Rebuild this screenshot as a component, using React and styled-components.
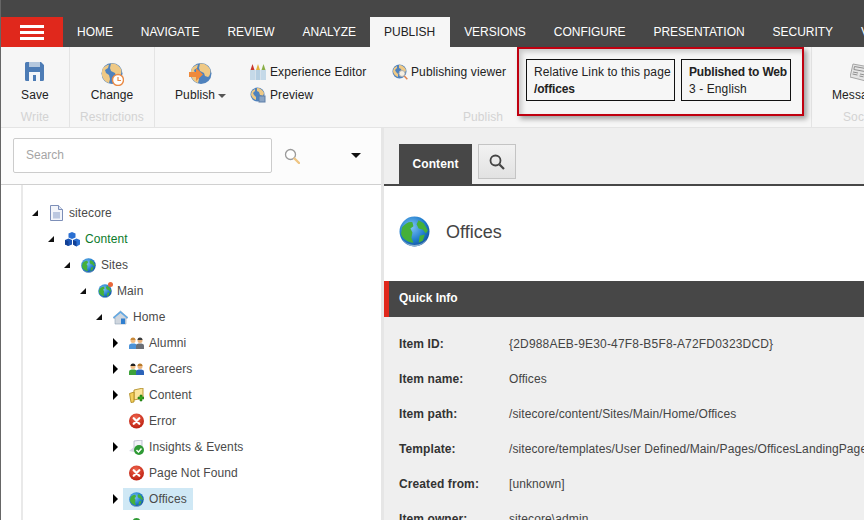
import React, { useId } from "react";
import styled, { createGlobalStyle } from "styled-components";

const tabs = ["Home", "Navigate", "Review", "Analyze", "Publish", "Versions", "Configure", "Presentation", "Security", "View"];

const treeRows = [
  { label: "sitecore", level: 0, arrow: "open", icon: "doc" },
  { label: "Content", level: 1, arrow: "open", icon: "cubes", green: true },
  { label: "Sites", level: 2, arrow: "open", icon: "globe" },
  { label: "Main", level: 3, arrow: "open", icon: "pinGlobe" },
  { label: "Home", level: 4, arrow: "open", icon: "house" },
  { label: "Alumni", level: 5, arrow: "closed", icon: "people" },
  { label: "Careers", level: 5, arrow: "closed", icon: "team" },
  { label: "Content", level: 5, arrow: "closed", icon: "folder" },
  { label: "Error", level: 5, icon: "error" },
  { label: "Insights & Events", level: 5, arrow: "closed", icon: "insights" },
  { label: "Page Not Found", level: 5, icon: "error" },
  { label: "Offices", level: 5, arrow: "closed", icon: "globe", selected: true },
  { label: "Locations", level: 5, icon: "pin" },
];

const infoRows = [
  ["Item ID:", "{2D988AEB-9E30-47F8-B5F8-A72FD0323DCD}"],
  ["Item name:", "Offices"],
  ["Item path:", "/sitecore/content/Sites/Main/Home/Offices"],
  ["Template:", "/sitecore/templates/User Defined/Main/Pages/OfficesLandingPage"],
  ["Created from:", "[unknown]"],
  ["Item owner:", "sitecore\\admin"],
];

function Globe({ size = 15 }) {
  const id = useId();
  return (
    <svg width={size} height={size} viewBox="0 0 30 30">
      <defs>
        <radialGradient id={id} cx="40%" cy="35%" r="70%">
          <stop offset="0" stopColor="#7fc4f5" />
          <stop offset="0.65" stopColor="#1f7ccc" />
          <stop offset="1" stopColor="#114f9c" />
        </radialGradient>
      </defs>
      <circle cx="15" cy="15" r="14.5" fill={`url(#${id})`} />
      <path d="M3 11c3-4 7-6 10-5l1 4-3 2 2 4-1 5 2 5c-5 0-11-4-12-9z" fill="#45b03a" />
      <path d="M19 4l5 3 4 7-2 3-3-4-4-1-2-4zM20 19l5-1-2 6-4 2z" fill="#45b03a" />
      <path d="M3 22c3 5 8 7.500 12 7.500S24 27 27 22c-3 4-7 6-12 6s-9-2-12-6z" fill="#8db3d2" />
    </svg>
  );
}

function TanGlobe({ overlay }) {
  return (
    <svg width="24" height="24" viewBox="0 0 24 24">
      <circle cx="12" cy="11.500" r="10.500" fill="#4f82bd" />
      <path d="M11 1.500c4-.5 8 1.500 10 5.500 1 3 0 7-2 8l-3-1-1-3-4-2-1-3zM3 6c2-2 4-3 6-3.500L8 6 5 8l1 3 3 2 1 4-1 4C5 20 2 16 1.800 12 2 10 2 8 3 6z" fill="#efc985" />
      {overlay === "arrow" && <path d="M0 10h7V6l7 6.500-7 6.500v-4H0z" fill="#ef8a3c" />}
      {overlay === "clock" && (
        <g>
          <circle cx="18" cy="18" r="5.500" fill="#fff" stroke="#ea8a45" strokeWidth="1.400" />
          <path d="M18 15v3.500h3" fill="none" stroke="#ea8a45" strokeWidth="1.200" />
        </g>
      )}
    </svg>
  );
}

function SmallTanGlobe({ overlay }) {
  return (
    <svg width="16" height="16" viewBox="0 0 16 16">
      <circle cx="7.500" cy="7.500" r="7" fill="#4f82bd" />
      <path d="M7 1c3 0 6 2 7 5l-1 3-3-1-1-3-2-1zM2 4l3-2v2L3 6l1 2 2 2v3c-3-1-5-4-5-6z" fill="#efc985" />
      {overlay === "lens" && (
        <g fill="none" stroke="#e0834f" strokeWidth="1.500">
          <circle cx="10" cy="9.500" r="3" fill="#f6efe2" stroke="#b0b0b0" strokeWidth="1" />
          <path d="M12.300 12l3 3.300" />
        </g>
      )}
      {overlay === "doc" && <rect x="9" y="9" width="6" height="6" fill="#8aa4c4" stroke="#5d7ea8" />}
    </svg>
  );
}

function SaveIcon() {
  return (
    <svg width="19" height="19" viewBox="0 0 19 19">
      <path d="M0 1.500A1.500 1.500 0 0 1 1.500 0H16l3 3v14.500a1.500 1.500 0 0 1-1.500 1.500h-16A1.500 1.500 0 0 1 0 17.500z" fill="#4d7cb5" />
      <rect x="4" y="0" width="11" height="5" fill="#b5c8de" />
      <rect x="4" y="10" width="11" height="9" fill="#f4f6f9" />
      <rect x="8" y="13" width="3" height="6" fill="#4d7cb5" />
    </svg>
  );
}

function CrayonsIcon() {
  return (
    <svg width="16" height="16" viewBox="0 0 16 16">
      <rect x="0" y="6" width="5" height="10" fill="#c5d9e8" />
      <rect x="5.500" y="6" width="5" height="10" fill="#b5cee1" />
      <rect x="11" y="6" width="5" height="10" fill="#c5d9e8" />
      <path d="M.5 6L2.500 0l2 6z" fill="#c8352b" />
      <path d="M6 6l2-6 2 6z" fill="#e3b33a" />
      <path d="M11.500 6l2-6 2 6z" fill="#8aae46" />
    </svg>
  );
}

function DocIcon() {
  return (
    <svg width="13" height="16" viewBox="0 0 13 16">
      <path d="M.5.500h8l4 4v11H.5z" fill="#f3f5fa" stroke="#7d8fb8" />
      <rect x="3" y="7" width="7" height="6.500" fill="#bcc8e0" />
      <path d="M8.500.500v4h4" fill="#dfe5f2" stroke="#7d8fb8" />
    </svg>
  );
}

function CubesIcon() {
  return (
    <svg width="15" height="15" viewBox="0 0 15 15">
      <path d="M4.500 0L8 1.500v4L4.500 7 1 5.500v-4z" fill="#2a6fd2" transform="translate(2.500 0)" />
      <path d="M0 8l3.500-1.500L7 8v4.500L3.500 14 0 12.500z" fill="#1c55b5" />
      <path d="M8 8l3.500-1.500L15 8v4.500L11.500 14.500 8 12.500z" fill="#2a6fd2" />
      <path d="M3.500 9.500V14L0 12.500V8zM11.500 9.500V14.500L8 12.500V8z" fill="#123f93" />
    </svg>
  );
}

function HouseIcon() {
  return (
    <svg width="15" height="15" viewBox="0 0 15 15">
      <path d="M7.500 1L15 7.500l-1 1-1-.8V14H2V7.700l-1 .8-1-1z" fill="#cfd6de" stroke="#8fa2b5" strokeWidth=".6" />
      <path d="M7.500 1L15 7.500l-1 1-6.500-5.500-6.500 5.500-1-1z" fill="#5fa8e6" />
      <rect x="8" y="8.500" width="4" height="5.500" fill="#2f7fd0" />
    </svg>
  );
}

function PersonPair({ leftShirt, rightShirt, leftHair, rightHair }) {
  return (
    <svg width="15" height="13" viewBox="0 0 15 13">
      <circle cx="4" cy="3.500" r="2.500" fill="#f0bd84" />
      <path d="M1.500 3a2.500 2.500 0 0 1 5 0z" fill={leftHair} />
      <path d="M0 12V8.500C0 7 2 6.500 4 6.500S8 7 8 8.500V12z" fill={leftShirt} />
      <circle cx="11" cy="3.500" r="2.500" fill="#e9b27c" />
      <path d="M8.500 3a2.500 2.500 0 0 1 5 0z" fill={rightHair} />
      <path d="M7 12V8.500C7 7 9 6.500 11 6.500s4 .5 4 2V12z" fill={rightShirt} />
    </svg>
  );
}

function FolderIcon() {
  return (
    <svg width="15" height="15" viewBox="0 0 15 15">
      <path d="M5 2l9-2v10l-9 2z" fill="#fbe59a" stroke="#a98418" strokeWidth=".8" />
      <path d="M.5 5.500L5 4v10l-3 .5z" fill="#f3cf5c" stroke="#a98418" strokeWidth=".8" />
      <path d="M9 9h2V7h2v2h2v2h-2v2h-2v-2H9z" fill="#36a51e" stroke="#14650a" strokeWidth=".5" />
    </svg>
  );
}

function ErrorIcon() {
  const id = useId();
  return (
    <svg width="16" height="16" viewBox="0 0 16 16">
      <defs>
        <radialGradient id={id} cx="45%" cy="30%" r="75%">
          <stop offset="0" stopColor="#f0654d" />
          <stop offset="1" stopColor="#b81a0c" />
        </radialGradient>
      </defs>
      <circle cx="8" cy="8" r="8" fill={`url(#${id})`} />
      <path d="M5 5l6 6M11 5l-6 6" stroke="#fff" strokeWidth="2.400" strokeLinecap="round" />
    </svg>
  );
}

function InsightsIcon() {
  return (
    <svg width="15" height="15" viewBox="0 0 15 15">
      <path d="M5 1l8-1v8l-8 3z" fill="#f2f3f8" stroke="#a7aabf" strokeWidth=".7" />
      <path d="M0 11l5-4v5z" fill="#d7d9e4" />
      <circle cx="10" cy="10" r="5" fill="#2f9a35" />
      <path d="M7.500 10l2 2 3-3.500" fill="none" stroke="#fff" strokeWidth="1.500" />
    </svg>
  );
}

function PinIcon() {
  return (
    <svg width="15" height="15" viewBox="0 0 15 15">
      <circle cx="7.500" cy="4" r="4" fill="#2f9a35" />
    </svg>
  );
}

function LensIcon() {
  return (
    <svg width="16" height="16" viewBox="0 0 16 16">
      <circle cx="6.500" cy="6.500" r="5" fill="#fff" stroke="#9a9a9a" strokeWidth="1.300" />
      <path d="M10.500 10.500l4.500 4.500" stroke="#eec583" strokeWidth="2.400" strokeLinecap="round" />
    </svg>
  );
}

function NewsIcon() {
  return (
    <svg width="20" height="20" viewBox="0 0 20 20">
      <path d="M3 2l16 3-3 14L0 15z" fill="#e4e4e4" stroke="#a5a5a5" />
      <path d="M4.500 4.500l11 2-.6 3-11-2zM3 10l5 1M2.500 12l5 1M10 12l4 .8M9.500 14l4 .8" stroke="#8f8f8f" fill="none" />
    </svg>
  );
}

function NodeIcon({ name }) {
  switch (name) {
    case "doc":
      return <DocIcon />;
    case "cubes":
      return <CubesIcon />;
    case "globe":
      return <Globe />;
    case "pinGlobe":
      return (
        <PinGlobe>
          <Globe size={14} />
          <PinDot />
        </PinGlobe>
      );
    case "house":
      return <HouseIcon />;
    case "people":
      return <PersonPair leftShirt="#4c93d8" rightShirt="#6b6f76" leftHair="#c98a3a" rightHair="#3a3a3a" />;
    case "team":
      return <PersonPair leftShirt="#3ea23a" rightShirt="#2b63b8" leftHair="#1f1f1f" rightHair="#b97a2a" />;
    case "folder":
      return <FolderIcon />;
    case "error":
      return <ErrorIcon />;
    case "insights":
      return <InsightsIcon />;
    default:
      return <PinIcon />;
  }
}

export default function App() {
  return (
    <>
      <GlobalStyle />
      <Shell>
        <TopBar>
          <MenuButton>
            <MenuLine />
            <MenuLine />
            <MenuLine />
          </MenuButton>
          <Tabs>
            {tabs.map((tab) => (
              <Tab key={tab} $active={tab === "Publish"}>{tab}</Tab>
            ))}
          </Tabs>
        </TopBar>

        <Ribbon>
          <Group $width={69}>
            <GroupBody>
              <LargeButton>
                <LargeIcon><SaveIcon /></LargeIcon>
                Save
              </LargeButton>
            </GroupBody>
            <GroupLabel>Write</GroupLabel>
          </Group>
          <Group $width={85}>
            <GroupBody>
              <LargeButton>
                <LargeIcon><TanGlobe overlay="clock" /></LargeIcon>
                Change
              </LargeButton>
            </GroupBody>
            <GroupLabel>Restrictions</GroupLabel>
          </Group>
          <Group $width={657}>
            <PublishBody>
              <PublishButton>
                <LargeIcon><TanGlobe overlay="arrow" /></LargeIcon>
                <span>Publish<Caret /></span>
              </PublishButton>
              <SmallColumn $width={142}>
                <SmallButton><CrayonsIcon />Experience Editor</SmallButton>
                <SmallButton><SmallTanGlobe overlay="doc" />Preview</SmallButton>
              </SmallColumn>
              <SmallColumn $width={134}>
                <SmallButton $gap={3}><SmallTanGlobe overlay="lens" />Publishing viewer</SmallButton>
              </SmallColumn>
              <InfoBox $width={149}>
                <span>Relative Link to this page</span>
                <strong>/offices</strong>
              </InfoBox>
              <InfoBox $width={110}>
                <strong>Published to Web</strong>
                <span>3 - English</span>
              </InfoBox>
            </PublishBody>
            <GroupLabel>Publish</GroupLabel>
          </Group>
          <SocialGroup>
            <SocialBody>
              <LargeButton>
                <LargeIcon><NewsIcon /></LargeIcon>
                Messages
              </LargeButton>
            </SocialBody>
            <SocialLabel>Social</SocialLabel>
          </SocialGroup>
          <Highlight />
        </Ribbon>

        <Main>
          <LeftPanel>
            <SearchBar>
              <SearchInput placeholder="Search" readOnly />
              <LensIcon />
              <SearchCaret />
            </SearchBar>
            <Tree>
              {treeRows.map((row, i) => (
                <TreeRow key={i} $level={row.level}>
                  <ArrowSlot>
                    {row.arrow === "open" && <OpenArrow />}
                    {row.arrow === "closed" && <ClosedArrow />}
                  </ArrowSlot>
                  <TreeNode $selected={row.selected} $green={row.green}>
                    <TreeIcon><NodeIcon name={row.icon} /></TreeIcon>
                    {row.label}
                  </TreeNode>
                </TreeRow>
              ))}
            </Tree>
          </LeftPanel>

          <RightPanel>
            <TabStrip>
              <ContentTab>Content</ContentTab>
              <SearchTab>
                <svg width="16" height="16" viewBox="0 0 16 16">
                  <circle cx="6.500" cy="6.500" r="5" fill="none" stroke="#444" strokeWidth="1.800" />
                  <path d="M10.500 10.500l4.500 4.500" stroke="#444" strokeWidth="2.200" />
                </svg>
              </SearchTab>
            </TabStrip>
            <TitleBand>
              <TitleIcon><Globe size={31} /></TitleIcon>
              <Title>Offices</Title>
            </TitleBand>
            <SectionBar>Quick Info</SectionBar>
            <InfoList>
              {infoRows.map(([label, value], i) => (
                <InfoRow key={label}>
                  <InfoLabel>{label}</InfoLabel>
                  <InfoValue $wide={i === 0}>{value}</InfoValue>
                </InfoRow>
              ))}
            </InfoList>
          </RightPanel>
        </Main>
      </Shell>
    </>
  );
}

const GlobalStyle = createGlobalStyle`
  html, body {
    margin: 0;
    padding: 0;
    overflow: hidden;
    background: #fff;
  }
  * {
    box-sizing: border-box;
  }
`;

const Shell = styled.div`
  width: 864px;
  height: 520px;
  overflow: hidden;
  display: flex;
  flex-direction: column;
  border-left: 1px solid #666;
  font-family: "Liberation Sans", Arial, sans-serif;
  font-size: 12px;
  letter-spacing: 0.1px;
  color: #222;
`;

const TopBar = styled.div`
  height: 47px;
  flex: none;
  display: flex;
  padding-top: 17px;
  background: #474747;
`;

const MenuButton = styled.div`
  width: 62px;
  flex: none;
  display: flex;
  flex-direction: column;
  justify-content: center;
  align-items: center;
  gap: 3px;
  background: #e0281c;
`;

const MenuLine = styled.span`
  width: 24px;
  height: 3px;
  background: #fff;
`;

const Tabs = styled.div`
  display: flex;
  white-space: nowrap;
`;

const Tab = styled.div`
  padding: ${(p) => (p.$active ? "0 15px 0 14px" : "0 14px")};
  line-height: 30px;
  letter-spacing: -0.04px;
  text-transform: uppercase;
  color: ${(p) => (p.$active ? "#222" : "#fff")};
  background: ${(p) => (p.$active ? "#f6f6f6" : "transparent")};
`;

const Ribbon = styled.div`
  position: relative;
  height: 81px;
  flex: none;
  display: flex;
  background: #f6f6f6;
  border-bottom: 1px solid #e4e4e4;
`;

const Group = styled.div`
  width: ${(p) => p.$width}px;
  flex: none;
  display: flex;
  flex-direction: column;
  border-right: 1px solid #e4e4e4;
`;

const SocialGroup = styled.div`
  flex: 1;
  min-width: 0;
  display: flex;
  flex-direction: column;
  overflow: hidden;
`;

const GroupBody = styled.div`
  height: 61px;
  flex: none;
  display: flex;
  justify-content: center;
  padding-top: 15px;
`;

const SocialBody = styled(GroupBody)`
  justify-content: flex-start;
  padding-left: 20px;
`;

const PublishBody = styled.div`
  height: 61px;
  flex: none;
  display: flex;
  padding: 13px 0 0 20px;
`;

const GroupLabel = styled.div`
  text-align: center;
  line-height: 18px;
  color: #d3d3d3;
  white-space: nowrap;
`;

const SocialLabel = styled(GroupLabel)`
  text-align: left;
  padding-left: 31px;
`;

const LargeButton = styled.div`
  display: flex;
  flex-direction: column;
  align-items: center;
  line-height: 16px;
  white-space: nowrap;
`;

const LargeIcon = styled.div`
  height: 25px;
  display: flex;
  justify-content: center;
`;

const PublishButton = styled(LargeButton)`
  width: 51px;
  flex: none;
  margin: 2px 24px 0 0;
  align-items: flex-start;

  ${LargeIcon} {
    align-self: center;
  }
`;

const Caret = styled.i`
  display: inline-block;
  margin-left: 3px;
  vertical-align: middle;
  border-left: 4px solid transparent;
  border-right: 4px solid transparent;
  border-top: 4px solid #555;
`;

const SmallColumn = styled.div`
  width: ${(p) => p.$width}px;
  flex: none;
  display: flex;
  flex-direction: column;
`;

const SmallButton = styled.div`
  height: 23px;
  display: flex;
  align-items: center;
  gap: ${(p) => p.$gap ?? 4}px;
  white-space: nowrap;
`;

const InfoBox = styled.div`
  width: ${(p) => p.$width}px;
  height: 42px;
  flex: none;
  margin: -1px 6px 0 0;
  padding: 1px 7px 0;
  display: flex;
  flex-direction: column;
  justify-content: center;
  border: 1px solid #111;
  line-height: 17px;
  white-space: nowrap;

  strong {
    letter-spacing: -0.15px;
  }
`;

const Highlight = styled.div`
  position: absolute;
  left: 516px;
  top: 0;
  width: 287px;
  height: 69px;
  border: 2px solid #c00010;
  box-shadow: 3px 3px 5px rgba(0, 0, 0, 0.35), inset 3px 3px 5px rgba(0, 0, 0, 0.18);
  pointer-events: none;
`;

const Main = styled.div`
  flex: 1;
  min-height: 0;
  display: flex;
`;

const LeftPanel = styled.div`
  width: 383px;
  flex: none;
  display: flex;
  flex-direction: column;
  background: #fff;
  border-right: 3px solid #e6e6e6;
`;

const SearchBar = styled.div`
  height: 57px;
  flex: none;
  display: flex;
  align-items: center;
  padding: 0 20px 1px 12px;
  background: #fcfcfc;
  border-bottom: 1px solid #d0d0d0;
`;

const SearchInput = styled.input`
  width: 259px;
  height: 35px;
  margin-right: 12px;
  padding: 0 12px 2px;
  border: 1px solid #ccc;
  border-radius: 2px;
  background: #fff;
  outline: none;
  font: inherit;
  &::placeholder {
    color: #a5a5a5;
  }
`;

const SearchCaret = styled.i`
  margin-left: auto;
  border-left: 5px solid transparent;
  border-right: 5px solid transparent;
  border-top: 5px solid #111;
`;

const Tree = styled.div`
  flex: 1;
  min-height: 0;
  overflow: hidden;
  margin-left: 20px;
  padding-top: 15px;
  border-left: 2px solid #e9e9e9;
`;

const TreeRow = styled.div`
  height: 26px;
  display: flex;
  align-items: center;
  padding-left: ${(p) => 9 + p.$level * 16}px;
`;

const ArrowSlot = styled.div`
  width: 11px;
  flex: none;
  display: flex;
  align-items: center;
`;

const OpenArrow = styled.i`
  width: 0;
  height: 0;
  border-left: 6px solid transparent;
  border-bottom: 6px solid #111;
`;

const ClosedArrow = styled.i`
  width: 0;
  height: 0;
  margin-left: 1px;
  border-top: 5px solid transparent;
  border-bottom: 5px solid transparent;
  border-left: 5px solid #000;
`;

const TreeNode = styled.div`
  height: 22px;
  display: flex;
  align-items: center;
  gap: 5px;
  padding: 0 6px;
  white-space: nowrap;
  color: ${(p) => (p.$green ? "#0b7a2a" : "#4a4a4a")};
  background: ${(p) => (p.$selected ? "#cfe8f5" : "transparent")};
`;

const TreeIcon = styled.span`
  width: 15px;
  height: 16px;
  flex: none;
  display: flex;
  align-items: center;
  justify-content: center;
`;

const PinGlobe = styled.span`
  position: relative;
  display: flex;
`;

const PinDot = styled.i`
  position: absolute;
  top: -2px;
  right: -1px;
  width: 5px;
  height: 5px;
  border-radius: 50%;
  background: #e8663a;
`;

const RightPanel = styled.div`
  flex: 1;
  min-width: 0;
  display: flex;
  flex-direction: column;
  background: #efefef;
`;

const TabStrip = styled.div`
  height: 58px;
  flex: none;
  display: flex;
  align-items: flex-start;
  gap: 6px;
  padding: 16px 0 0 15px;
  border-bottom: 2px solid #474747;
`;

const ContentTab = styled.div`
  width: 73px;
  height: 40px;
  text-align: center;
  line-height: 41px;
  font-weight: bold;
  color: #fff;
  background: #474747;
`;

const SearchTab = styled.div`
  width: 38px;
  height: 35px;
  display: flex;
  align-items: center;
  justify-content: center;
  border: 1px solid #c4c4c4;
  background: linear-gradient(#f2f2f2, #e2e2e2);
`;

const TitleBand = styled.div`
  height: 95px;
  flex: none;
  display: flex;
  align-items: center;
  gap: 16px;
  padding: 0 0 2px 15px;
  background: #fff;
`;

const TitleIcon = styled.span`
  display: flex;
  margin-bottom: 3px;
`;

const Title = styled.div`
  font-size: 18px;
  letter-spacing: 0;
  color: #444;
`;

const SectionBar = styled.div`
  height: 36px;
  flex: none;
  padding-left: 10px;
  line-height: 34px;
  font-weight: bold;
  letter-spacing: 0;
  color: #fff;
  background: #474747;
  border-left: 5px solid #e0281c;
`;

const InfoList = styled.div`
  padding: 9px 0 0 15px;
`;

const InfoRow = styled.div`
  height: 35px;
  display: flex;
  align-items: center;
  white-space: nowrap;
`;

const InfoLabel = styled.div`
  width: 110px;
  flex: none;
  font-weight: bold;
  color: #333;
`;

const InfoValue = styled.div`
  letter-spacing: ${(p) => (p.$wide ? "0.18px" : "0.1px")};
  color: #444;
`;
